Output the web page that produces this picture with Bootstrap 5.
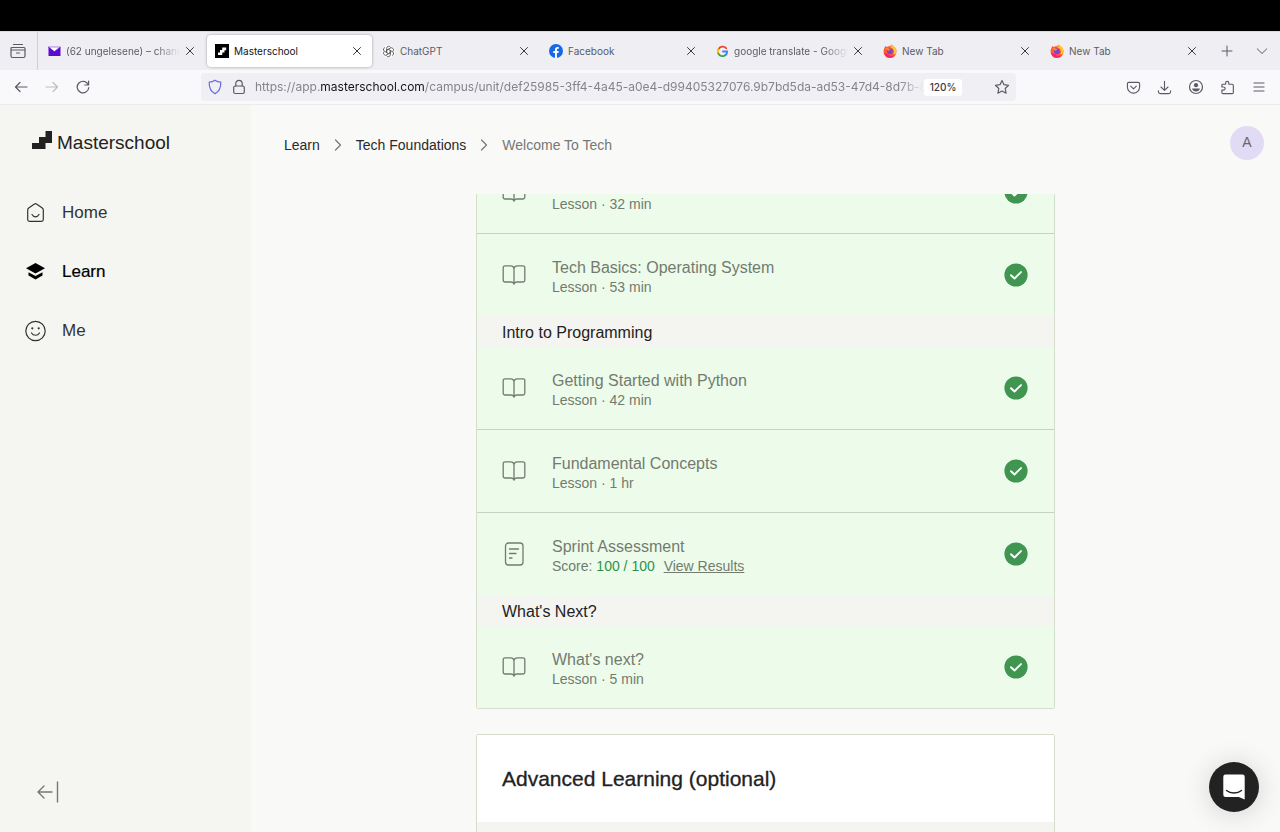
<!DOCTYPE html>
<html lang="en">
<head>
<meta charset="utf-8">
<meta name="viewport" content="width=device-width, initial-scale=1">
<title>Masterschool</title>
<link href="https://cdn.jsdelivr.net/npm/bootstrap@5.3.0/dist/css/bootstrap.min.css" rel="stylesheet">
<style>
  body { font-family: "Liberation Sans", Arial, sans-serif; background: #f9f9f7; color: #222; }
  button { color: inherit; }
  svg { display: block; flex: none; fill: none; stroke: currentColor; stroke-linecap: round; stroke-linejoin: round; }
  .plain-btn { border: 0; background: none; padding: 0; display: flex; }

  /* browser chrome */
  .chrome { font-family: Inter, sans-serif; color: #5b5b66; }
  .top-strip { height: 31px; background: #000; }
  .tab-strip { height: 39px; background: #efeef3; border-top: 1px solid #d9d9de; }
  .archive { width: 38px; margin-right: 2px; padding-right: 2px; border-right: 1px solid #cfcfd8; }
  .tab-item { width: 167px; min-width: 0; padding: 0 12px 0 8px; font-size: 10px; line-height: 16px; gap: 5px; height: 32px; border-radius: 4px; }
  .tab-item.current { background: #fff; color: #15141a; box-shadow: 0 0 3px rgba(0,0,0,.35); width: 165px; margin-right: 2px; padding-right: 10px; }
  .tab-title { flex: 1 1 0; min-width: 0; overflow: hidden; white-space: nowrap; text-align: left; }
  .fade-end { -webkit-mask-image: linear-gradient(to left, transparent, #000 24px); mask-image: linear-gradient(to left, transparent, #000 24px); }
  .strip-end { padding-right: 12px; gap: 23px; }
  .toolbar { height: 35px; background: #f9f9fb; border-bottom: 1px solid #ececef; }
  .nav-group { width: 201px; padding-left: 14px; gap: 17px; }
  .url-bar { flex: 0 1 815px; min-width: 0; height: 28px; background: #f0f0f4; border-radius: 4px; padding: 0 6px; font-size: 12px; }
  .url-text { flex: 1 1 0; min-width: 0; overflow: hidden; white-space: nowrap; color: #84848d; }
  .url-text b { font-weight: 400; color: #15141a; }
  .zoom-pill { background: #fff; border-radius: 3px; font-size: 10px; line-height: 17px; width: 38px; justify-content: center; color: #3b3b44; font-weight: 500; }
  .tools { gap: 16px; padding-right: 13px; }

  /* sidebar */
  .side { width: 251px; flex: none; background: #f5f6f1; padding: 22px 24px 28px; }
  .brand { gap: 5px; font-size: 19px; line-height: 24px; padding-left: 8px; color: #222; }
  .side-nav { margin-top: 28px; }
  .side-nav a { height: 59px; gap: 15px; font-size: 17px; color: #333; text-decoration: none; }
  .side-nav a.current { color: #000; -webkit-text-stroke: 0.2px; }

  /* content */
  .head { height: 89px; padding: 0 16px 14px 33px; flex: none; }
  .crumbs { font-size: 14px; gap: 14px; color: #777; padding-top: 5px; }
  .crumbs a { color: #2a2a2a; text-decoration: none; }
  .avatar { width: 34px; height: 34px; background: #e2dbf5; color: #666; font-size: 14px; justify-content: center; align-items: center; }
  .scroller { overflow: hidden; }
  .col-cards { width: 579px; max-width: 100%; }
  .unit-card { border: 1px solid #d5ddcd; border-radius: 2px; }
  .unit-card.scrolled { margin-top: -44px; margin-bottom: 25px; }
  .lesson { height: 82px; background: #edfcea; padding: 0 26px 0 25px; color: #727b70; }
  .lesson + .lesson { border-top: 1px solid #c5d3c0; height: 83px; }
  .lesson-text { margin-left: 26px; padding-top: 5px; }
  .lesson-title { font-size: 16px; line-height: 20px; min-height: 20px; }
  .lesson-meta { font-size: 14px; line-height: 19px; }
  .lesson-meta a { color: inherit; margin-left: 5px; }
  .score { color: #2f9149; }
  .section-name { height: 31px; background: #f4f4f1; padding: 1px 25px 0; font-size: 16px; line-height: 31px; }
  .unit-head { height: 87px; padding: 0 25px; background: #fff; font-size: 21px; line-height: 88px; -webkit-text-stroke: 0.3px; }
  .unit-foot { height: 60px; background: #f4f4f1; }
  .chat { position: fixed; right: 21px; bottom: 20px; width: 50px; height: 50px; background: #222; align-items: center; justify-content: center; box-shadow: 0 2px 28px rgba(0,0,0,.16); }
</style>
</head>
<body>
<svg width="0" height="0" class="position-absolute" aria-hidden="true">
  <symbol id="i-x" viewBox="0 0 10 10"><path d="M1.500 1.500l7 7M8.500 1.500l-7 7" stroke="#3a3a42"/></symbol>
  <symbol id="i-book" viewBox="0 0 24 24"><path d="M12 20.500c-.6-1-1.500-1.500-3-1.500H3a1.800 1.800 0 0 1-1.800-1.800V4.600C1.200 3.500 2 2.800 3 2.800h5.500c2 0 3.500 1.200 3.500 3.400zM12 20.500c.6-1 1.500-1.500 3-1.500h6a1.800 1.800 0 0 0 1.800-1.800V4.600c0-1.100-.8-1.800-1.800-1.800h-5.500c-2 0-3.500 1.200-3.500 3.400z" stroke-width="1.300"/><path d="M10.500 20.200h3L12 22z" fill="currentColor" stroke="none"/></symbol>
  <symbol id="i-done" viewBox="0 0 24 24"><circle cx="12" cy="12" r="11.600" fill="#409551" stroke="none"/><path d="M7 12.200l3.500 3.300 6.500-6.400" stroke="#fff" stroke-width="1.900"/></symbol>
  <symbol id="i-sep" viewBox="0 0 8 12"><path d="M1.500 1L6.500 6l-5 5" stroke="#777" stroke-width="1.200"/></symbol>
  <symbol id="i-fox" viewBox="0 0 14 14"><path d="M1.200 4.500L2.300 2l1.300 1C5 2 6 2.200 7 2.200L8.600.6c.8 1 1.700 1.500 2.600 2.200 1.800 1.400 2.400 3.200 2.200 5A6.400 6.400 0 0 1 .6 8C.5 6.700.7 5.500 1.200 4.500z" fill="#ff5a35" stroke="none"/><path d="M8.600.6c.8 1 1.700 1.500 2.600 2.200 1.800 1.400 2.400 3.200 2.200 5-.4 2.200-2 3-3 2.500C12 7 10 4 7.500 3.500z" fill="#ffc62e" stroke="none"/><path d="M1 9c1.500 5 8 6 11.200 2-3 1.500-6 1-7.500-1z" fill="#f5216e" stroke="none"/><circle cx="7" cy="7.300" r="2.900" fill="#7b45cf" stroke="none"/><path d="M2.300 4.500c1.500-.8 3-.5 3.500.6h1.700c-.3 1-1.500 1-1.700 2" fill="#ff8a24" stroke="none"/></symbol>
</svg>

<div class="vh-100 d-flex flex-column overflow-hidden">
  <header class="chrome flex-shrink-0">
    <div class="top-strip"></div>
    <div class="tab-strip d-flex align-items-center">
      <div class="archive h-100 d-flex align-items-center justify-content-center flex-shrink-0">
        <button class="plain-btn" aria-label="Recent browsing"><svg width="16" height="16" viewBox="0 0 16 16"><path d="M3.500 1.500h9M2 4.500h12A1 1 0 0 1 15 5.500V13a1.500 1.500 0 0 1-1.500 1.500h-11A1.500 1.500 0 0 1 1 13V5.500A1 1 0 0 1 2 4.500zM1 7h14M6.500 10h3" stroke-width="1.200"/></svg></button>
      </div>
      <div class="tab-item d-flex align-items-center">
        <svg width="13" height="13" viewBox="0 0 13 13"><path d="M.5 2h12v9H.5z" fill="#5c0bd0" stroke="none"/><path d="M.8 2h11.400L6.500 6.600z" fill="#fff" stroke="#5c0bd0" stroke-width=".5"/></svg>
        <span class="tab-title fade-end">(62 ungelesene) – chanie</span>
        <button class="plain-btn" aria-label="Close tab"><svg width="10" height="10"><use href="#i-x"/></svg></button>
      </div>
      <div class="tab-item current d-flex align-items-center">
        <svg width="14" height="14" viewBox="0 0 14 14"><path d="M0 0h14v14H0z" fill="#000" stroke="none"/><path d="M3 11V8.500h2V6h2.200V3.500h4V6.200H9.500v2.400H7.300V11z" fill="#fff" stroke="none"/></svg>
        <span class="tab-title">Masterschool</span>
        <button class="plain-btn" aria-label="Close tab"><svg width="10" height="10"><use href="#i-x"/></svg></button>
      </div>
      <div class="tab-item d-flex align-items-center">
        <svg width="13" height="13" viewBox="0 0 14 14"><circle cx="7" cy="7" r="7" fill="#fff" stroke="none"/><g stroke="#555" stroke-width="1"><path d="M5 7.800V3.600a2.300 2.300 0 0 1 4.200-1.300M9 6.200v4.200a2.300 2.300 0 0 1-4.200 1.300M5.300 5.500l3.600-2.100a2.300 2.300 0 0 1 3.300 3M8.700 8.500l-3.600 2.100a2.300 2.300 0 0 1-3.300-3M5.300 8.300L1.900 6.200a2.300 2.300 0 0 1 1-3.400M8.700 5.700l3.400 2.100a2.300 2.300 0 0 1-1 3.400"/><path d="M7 4.700l2 1.100v2.400L7 9.300 5 8.200V5.800z"/></g></svg>
        <span class="tab-title">ChatGPT</span>
        <button class="plain-btn" aria-label="Close tab"><svg width="10" height="10"><use href="#i-x"/></svg></button>
      </div>
      <div class="tab-item d-flex align-items-center">
        <svg width="14" height="14" viewBox="0 0 14 14"><circle cx="7" cy="7" r="7" fill="#1668e8" stroke="none"/><path d="M6 14V9H4.300V7H6V5.600c0-1.800 1-2.700 2.600-2.700.5 0 1 .1 1.200.1v1.700h-.9c-.8 0-1 .5-1 1V7h1.800l-.3 2H7.900v5z" fill="#fff" stroke="none"/></svg>
        <span class="tab-title">Facebook</span>
        <button class="plain-btn" aria-label="Close tab"><svg width="10" height="10"><use href="#i-x"/></svg></button>
      </div>
      <div class="tab-item d-flex align-items-center">
        <svg width="13" height="13" viewBox="0 0 14 14" stroke-width="2"><path d="M11 3.500A5 5 0 0 0 2.600 4.700" stroke="#ea4335"/><path d="M2.600 4.700a5 5 0 0 0 0 4.600" stroke="#fbbc05"/><path d="M2.600 9.300A5 5 0 0 0 10.300 10.800" stroke="#34a853"/><path d="M10.300 10.800A4.500 4.500 0 0 0 12 7H7.500" stroke="#4285f4" stroke-linejoin="miter"/></svg>
        <span class="tab-title fade-end">google translate - Google</span>
        <button class="plain-btn" aria-label="Close tab"><svg width="10" height="10"><use href="#i-x"/></svg></button>
      </div>
      <div class="tab-item d-flex align-items-center">
        <svg width="14" height="14"><use href="#i-fox"/></svg>
        <span class="tab-title">New Tab</span>
        <button class="plain-btn" aria-label="Close tab"><svg width="10" height="10"><use href="#i-x"/></svg></button>
      </div>
      <div class="tab-item d-flex align-items-center">
        <svg width="14" height="14"><use href="#i-fox"/></svg>
        <span class="tab-title">New Tab</span>
        <button class="plain-btn" aria-label="Close tab"><svg width="10" height="10"><use href="#i-x"/></svg></button>
      </div>
      <div class="strip-end d-flex ms-auto">
        <button class="plain-btn" aria-label="New tab"><svg width="12" height="12" viewBox="0 0 12 12"><path d="M6 1v10M1 6h10"/></svg></button>
        <button class="plain-btn" aria-label="List tabs"><svg width="12" height="12" viewBox="0 0 12 12"><path d="M1.200 3.800L6 8.500l4.800-4.700"/></svg></button>
      </div>
    </div>
    <div class="toolbar d-flex align-items-center">
      <div class="nav-group d-flex align-items-center flex-shrink-0">
        <button class="plain-btn" aria-label="Back"><svg width="14" height="14" viewBox="0 0 14 14"><path d="M13 7H1.500M6 2.500L1.500 7 6 11.500" stroke-width="1.200"/></svg></button>
        <button class="plain-btn" aria-label="Forward" disabled><svg width="14" height="14" viewBox="0 0 14 14"><path d="M1 7h11.500M8 2.500L12.500 7 8 11.500" stroke="#bdbdc4" stroke-width="1.200"/></svg></button>
        <button class="plain-btn" aria-label="Reload"><svg width="14" height="14" viewBox="0 0 14 14"><path d="M12.600 1v4H8.800M12.300 4.700A5.800 5.800 0 1 0 12.800 7.500" stroke-width="1.200"/></svg></button>
      </div>
      <div class="url-bar d-flex align-items-center">
        <svg class="me-2" width="16" height="16" viewBox="0 0 16 16"><path d="M8 1.200c1.800 1.300 3.600 1.800 5.800 2C14 8.500 12 12.500 8 14.800 4 12.500 2 8.500 2.200 3.200c2.200-.2 4-.7 5.800-2z" stroke="#6a6ae0" stroke-width="1.200"/></svg>
        <svg width="16" height="16" viewBox="0 0 16 16" class="me-2"><rect x="2.700" y="7" width="10.600" height="7.500" rx="1.500" stroke-width="1.200"/><path d="M4.800 7V4.500a3.200 3.200 0 0 1 6.400 0V7" stroke-width="1.200"/></svg>
        <span class="url-text fade-end">https://app.<b>masterschool.com</b>/campus/unit/def25985-3ff4-4a45-a0e4-d99405327076.9b7bd5da-ad53-47d4-8d7b-8</span>
        <button class="plain-btn zoom-pill">120%</button>
        <button class="plain-btn ms-4 ps-2" aria-label="Bookmark"><svg width="16" height="16" viewBox="0 0 16 16"><path d="M8 1.500l2 4.200 4.600.6-3.400 3.200.9 4.700L8 12l-4.100 2.200.9-4.700L1.400 6.300 6 5.700z" stroke-width="1.200"/></svg></button>
      </div>
      <div class="tools d-flex align-items-center ms-auto">
        <button class="plain-btn" aria-label="Save to Pocket"><svg width="15" height="15" viewBox="0 0 16 16"><path d="M3 2.500h10A1.500 1.500 0 0 1 14.500 4v3.500a6.500 6.500 0 0 1-13 0V4A1.500 1.500 0 0 1 3 2.500zM5 6.500l3 3 3-3" stroke-width="1.200"/></svg></button>
        <button class="plain-btn" aria-label="Downloads"><svg width="15" height="15" viewBox="0 0 16 16"><path d="M8 1.500v9.500M4.200 7.500L8 11l3.800-3.500M1.500 11.500v1a2 2 0 0 0 2 2h9a2 2 0 0 0 2-2v-1" stroke-width="1.200"/></svg></button>
        <button class="plain-btn" aria-label="Account"><svg width="16" height="16" viewBox="0 0 16 16"><circle cx="8" cy="8" r="6.500" stroke-width="1.200"/><circle cx="8" cy="6.200" r="2.100" fill="currentColor" stroke="none"/><path d="M4 9.500h8c-.6 2-2 3-4 3s-3.400-1-4-3z" fill="currentColor" stroke="none"/></svg></button>
        <button class="plain-btn" aria-label="Extensions"><svg width="15" height="15" viewBox="0 0 16 16"><path d="M6 4.500V3.200a1.700 1.700 0 0 1 3.400 0v1.300H13c.8 0 1.200.4 1.200 1.200v7.600c0 .8-.4 1.200-1.200 1.200H3.200c-.8 0-1.200-.4-1.200-1.200v-2.500h1.800a1.700 1.700 0 0 0 0-3.400H2V5.700c0-.8.400-1.200 1.200-1.200z" stroke-width="1.200"/></svg></button>
        <button class="plain-btn" aria-label="Menu"><svg width="16" height="16" viewBox="0 0 16 16"><path d="M3 4h10M3 8h10M3 12h10" stroke-width="1.200"/></svg></button>
      </div>
    </div>
  </header>

  <div class="d-flex flex-grow-1 overflow-hidden">
    <aside class="side d-flex flex-column">
      <div class="brand d-flex align-items-center">
        <svg width="20" height="20" viewBox="0 0 20 20"><path d="M0 18v-6h7V6h6.500V0H20v12h-6.500v6z" fill="#222" stroke="none"/></svg>
        <span class="pt-1">Masterschool</span>
      </div>
      <nav class="side-nav d-flex flex-column">
        <a href="#" class="d-flex align-items-center"><svg width="23" height="22" viewBox="0 0 23 22"><path d="M3.700 8c0-1 .3-1.500 1-2L10.500 2c.7-.5 1.300-.5 2 0L18.300 6c.7.500 1 1 1 2v9.500c0 1.200-.6 1.800-1.800 1.800h-12c-1.200 0-1.800-.6-1.800-1.800zM8 12.500c1.800 3.200 5.200 3.200 7 0" stroke-width="1.200"/></svg>Home</a>
        <a href="#" class="current d-flex align-items-center"><svg width="23" height="22" viewBox="0 0 23 22"><path d="M11.500 2L21 7.200l-9.500 5.300L2 7.200z" fill="#000" stroke="none"/><path d="M4.500 11.200l7 3.800 7-3.800v3.300l-7 4-7-4z" fill="#000" stroke="none"/></svg>Learn</a>
        <a href="#" class="d-flex align-items-center"><svg width="23" height="22" viewBox="0 0 23 22"><circle cx="11.500" cy="11" r="9.700" stroke-width="1.200"/><circle cx="8.300" cy="8.300" r="1.100" fill="currentColor" stroke="none"/><circle cx="14.700" cy="8.300" r="1.100" fill="currentColor" stroke="none"/><path d="M7.500 13c1.800 3 6.200 3 8 0" stroke-width="1.200"/></svg>Me</a>
      </nav>
      <button class="plain-btn mt-auto ms-2 ps-1" aria-label="Collapse sidebar"><svg width="24" height="24" viewBox="0 0 24 24"><path d="M16 12H2M8 6l-6 6 6 6M21.500 2v20" stroke="#777" stroke-width="1.400"/></svg></button>
    </aside>

    <main class="d-flex flex-column flex-grow-1 overflow-hidden">
      <div class="head d-flex align-items-center justify-content-between">
        <nav class="crumbs d-flex align-items-center" aria-label="breadcrumb">
          <a href="#">Learn</a>
          <svg width="8" height="12"><use href="#i-sep"/></svg>
          <a href="#">Tech Foundations</a>
          <svg width="8" height="12"><use href="#i-sep"/></svg>
          <span>Welcome To Tech</span>
        </nav>
        <button class="plain-btn avatar rounded-circle">A</button>
      </div>

      <div class="scroller flex-grow-1">
        <div class="col-cards mx-auto d-flex flex-column">
          <section class="unit-card scrolled">
            <div class="lesson d-flex align-items-center">
              <svg width="24" height="24"><use href="#i-book"/></svg>
              <div class="lesson-text"><div class="lesson-title"></div><div class="lesson-meta">Lesson · 32 min</div></div>
              <svg class="ms-auto" width="24" height="24"><use href="#i-done"/></svg>
            </div>
            <div class="lesson d-flex align-items-center">
              <svg width="24" height="24"><use href="#i-book"/></svg>
              <div class="lesson-text"><div class="lesson-title">Tech Basics: Operating System</div><div class="lesson-meta">Lesson · 53 min</div></div>
              <svg class="ms-auto" width="24" height="24"><use href="#i-done"/></svg>
            </div>
            <div class="section-name">Intro to Programming</div>
            <div class="lesson d-flex align-items-center">
              <svg width="24" height="24"><use href="#i-book"/></svg>
              <div class="lesson-text"><div class="lesson-title">Getting Started with Python</div><div class="lesson-meta">Lesson · 42 min</div></div>
              <svg class="ms-auto" width="24" height="24"><use href="#i-done"/></svg>
            </div>
            <div class="lesson d-flex align-items-center">
              <svg width="24" height="24"><use href="#i-book"/></svg>
              <div class="lesson-text"><div class="lesson-title">Fundamental Concepts</div><div class="lesson-meta">Lesson · 1 hr</div></div>
              <svg class="ms-auto" width="24" height="24"><use href="#i-done"/></svg>
            </div>
            <div class="lesson d-flex align-items-center">
              <svg width="24" height="24" viewBox="0 0 24 24"><rect x="3.500" y="1" width="17.500" height="22" rx="3" stroke-width="1.300"/><path d="M7.500 7h9M7.500 11.500h6.500M7.500 16h2.500" stroke-width="1.300"/></svg>
              <div class="lesson-text"><div class="lesson-title">Sprint Assessment</div><div class="lesson-meta">Score: <span class="score">100 / 100</span> <a href="#">View Results</a></div></div>
              <svg class="ms-auto" width="24" height="24"><use href="#i-done"/></svg>
            </div>
            <div class="section-name">What's Next?</div>
            <div class="lesson d-flex align-items-center">
              <svg width="24" height="24"><use href="#i-book"/></svg>
              <div class="lesson-text"><div class="lesson-title">What's next?</div><div class="lesson-meta">Lesson · 5 min</div></div>
              <svg class="ms-auto" width="24" height="24"><use href="#i-done"/></svg>
            </div>
          </section>
          <section class="unit-card">
            <h2 class="unit-head m-0 fw-normal">Advanced Learning (optional)</h2>
            <div class="unit-foot"></div>
          </section>
        </div>
      </div>
    </main>
  </div>
</div>

<button class="plain-btn chat rounded-circle" aria-label="Open chat"><svg width="24" height="26" viewBox="0 0 24 26"><path d="M3.500.5h17A2.200 2.200 0 0 1 22.700 2.700v22.800l-6-2.500H3.500A2.200 2.200 0 0 1 1.300 20.800V2.700A2.200 2.200 0 0 1 3.500.5z" fill="#fff" stroke="none"/><path d="M4.500 16.500c4 3.300 11 3.300 15 0" stroke="#222" stroke-width="1.400"/></svg></button>
<script src="https://cdn.jsdelivr.net/npm/bootstrap@5.3.0/dist/js/bootstrap.bundle.min.js"></script>
</body>
</html>
